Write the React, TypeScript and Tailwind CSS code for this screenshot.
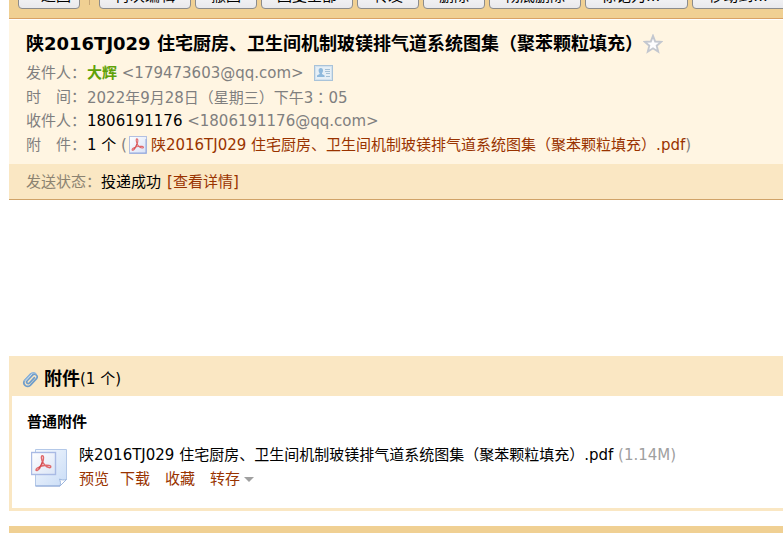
import React, { memo } from 'react';

interface ToolbarAction {
    label: string;
    hasMenu?: boolean;
}

const FILE_TITLE = '陕2016TJ029 住宅厨房、卫生间机制玻镁排气道系统图集（聚苯颗粒填充）';

const TOOLBAR_ACTIONS: ToolbarAction[] = [
    { label: '再次编辑' },
    { label: '撤回' },
    { label: '回复全部' },
    { label: '转发' },
    { label: '删除' },
    { label: '彻底删除' },
    { label: '标记为...', hasMenu: true },
    { label: '移动到...', hasMenu: true },
];

const BUTTON_CLASS =
    'flex h-[26px] shrink-0 items-center whitespace-nowrap rounded-[4px] border border-[#8c8c8c] bg-linear-to-b from-white to-[#e9e9ec] leading-5';

const StarIcon = () => (
    <svg width="20" height="20" viewBox="0 0 20 20" aria-hidden="true">
        <path
            d="M10 1.8 12.2 7.500 18.200 7.900 13.700 11.700 15.200 17.700 10 14.300 4.800 17.700 6.300 11.700 1.800 7.900 7.800 7.500Z"
            fill="#fdfdfe"
            stroke="#c3c7cf"
            strokeWidth="1.9"
        />
    </svg>
);

const ContactCardIcon = () => (
    <svg width="19" height="16" viewBox="0 0 19 16" aria-hidden="true">
        <rect x="0.5" y="0.5" width="18" height="15" fill="#e6eff6" stroke="#a9c3d9" />
        <rect x="1.5" y="1.5" width="16" height="13" fill="none" stroke="#d3e2ee" />
        <path d="M6.8 3c1.5 0 2.2 1 2.2 2.4 0 1.2-.5 2.1-1 2.6v1l2.6 1.4V12H3v-1.6L5.6 9V8c-.5-.5-1-1.4-1-2.6C4.6 4 5.3 3 6.8 3Z" fill="#8fb9dc" />
        <path d="M11 4.5h5M11 6.5h5M12 8.5h4M12 11.5h4" stroke="#a4c0d6" />
    </svg>
);

const AcrobatMark = () => (
    <>
        <path
            d="M7.8 2.8C9.2 2.6 9 5.500 8.300 7.500 7.500 9.900 5.600 13.500 4 14.200 2.800 14.600 2.700 13.300 4.100 12.300 6.300 10.900 10.500 9.900 13.200 10.400 15.200 10.800 14.700 12.300 13.100 12 10.800 11.600 8.400 8.900 7.600 6.300 7.200 4.800 6.900 3 7.800 2.800Z"
            fill="none"
            stroke="#e0686b"
            strokeWidth="1.1"
        />
        <path d="M8 7.500C7.300 9.500 6.300 11.300 5.200 12.800" fill="none" stroke="#d1474b" strokeWidth="0.8" />
    </>
);

const PdfSmallIcon = () => (
    <svg className="ml-[2px] shrink-0" width="18" height="18" viewBox="0 0 18 18" aria-hidden="true">
        <defs>
            <linearGradient id="pdf-small" x1="0" y1="0" x2="1" y2="1">
                <stop offset="0" stopColor="#fff" />
                <stop offset="1" stopColor="#d8e1f6" />
            </linearGradient>
        </defs>
        <rect x="0.5" y="0.5" width="17" height="17" fill="url(#pdf-small)" stroke="#b3c0e2" />
        <path d="M1 17h16V3" fill="none" stroke="#94a8dc" />
        <AcrobatMark />
    </svg>
);

const PdfLargeIcon = () => (
    <svg width="36" height="39" viewBox="0 0 36 39" aria-hidden="true">
        <defs>
            <linearGradient id="pdf-page" x1="0" y1="0" x2="1" y2="1">
                <stop offset="0" stopColor="#f5f9fe" />
                <stop offset="1" stopColor="#c9dcf6" />
            </linearGradient>
            <linearGradient id="pdf-badge" x1="0" y1="0" x2="1" y2="1">
                <stop offset="0" stopColor="#fff" />
                <stop offset="1" stopColor="#dbe5f6" />
            </linearGradient>
        </defs>
        <path d="M4.5 1.5h31v30l-6.5 6.5H4.5Z" fill="url(#pdf-page)" stroke="#b3c8e8" />
        <path d="M35.5 31.500c-3 .8-5 .5-7-.5 1 2.500 1.300 4.500.5 7Z" fill="#fff" stroke="#9db7df" />
        <path d="M4.5 38H29" stroke="#8ba6d6" />
        <rect x="0.5" y="4.5" width="24" height="22" fill="url(#pdf-badge)" stroke="#a9bae4" strokeWidth="1.4" />
        <g transform="translate(1 4) scale(1.3)">
            <AcrobatMark />
        </g>
    </svg>
);

const PaperclipIcon = () => (
    <svg width="17" height="17" viewBox="0 0 17 17" fill="none" strokeLinecap="round" aria-hidden="true">
        <path
            d="M12.4 6.6 7.600 11.800C5.800 13.600 3.600 11.600 5.200 9.700L10.500 4.100C12.700 1.900 16.500 4.600 14.700 7.400L8.300 14.300C5 17.300.3 13.500 2.400 9.800L8.800 2.900"
            stroke="#6f9dcb"
            strokeWidth="1.7"
        />
        <path d="M2.400 9.800 8.800 2.900C10.300 1.300 12.500 1.400 13.800 2.700" stroke="#8fb6dc" strokeWidth="1.4" />
        <path d="M3.800 9.600 9.600 3.400" stroke="#d3e6f5" strokeWidth="0.8" />
    </svg>
);

const Toolbar = memo(() => (
    <div className="overflow-hidden border-b border-[#d9a266] bg-[#f0d093]">
        <div className="-mt-[17px] flex items-end gap-1 pb-[9px] pl-[9px]">
            <button type="button" className={`${BUTTON_CLASS} px-2`}>
                « 返回
            </button>
            <span className="mx-[5px] mb-1 h-[18px] w-[2px] border-l border-[#c9a876] bg-white" />
            {TOOLBAR_ACTIONS.map(({ label, hasMenu }) => (
                <button key={label} type="button" className={`${BUTTON_CLASS} px-[15px]`}>
                    {label}
                    {hasMenu && (
                        <span className="ml-1 h-0 w-0 border-x-4 border-t-4 border-x-transparent border-t-[#555555]" />
                    )}
                </button>
            ))}
        </div>
    </div>
));
Toolbar.displayName = 'Toolbar';

const MailHeader = memo(() => (
    <header className="border-t border-white bg-[#fff5e2] pb-[7px] pl-[17px]">
        <div className="flex h-[41px] items-center pt-[6px]">
            <h1 className="whitespace-nowrap text-[18px] font-bold leading-6">{FILE_TITLE}</h1>
            <button type="button" aria-label="星标" className="shrink-0">
                <StarIcon />
            </button>
        </div>
        <dl className="text-[#7f7f7f]">
            <div className="flex h-6 items-center">
                <dt className="w-[61px] shrink-0 whitespace-nowrap">发件人：</dt>
                <dd className="flex items-center whitespace-pre">
                    <b className="text-[#5fa207]">大辉</b> &lt;179473603@qq.com&gt;
                    <button type="button" aria-label="联系人" className="ml-[10px]">
                        <ContactCardIcon />
                    </button>
                </dd>
            </div>
            <div className="flex h-6 items-center">
                <dt className="w-[61px] shrink-0 whitespace-nowrap">时　间：</dt>
                <dd>
                    2022年9月28日（星期三）下午3
                    <span className="font-['Noto_Sans_CJK_TC',sans-serif]" lang="zh-TW">：</span>
                    05
                </dd>
            </div>
            <div className="flex h-6 items-center">
                <dt className="w-[61px] shrink-0 whitespace-nowrap">收件人：</dt>
                <dd>
                    <span className="text-black">1806191176</span> &lt;1806191176@qq.com&gt;
                </dd>
            </div>
            <div className="flex h-6 items-center">
                <dt className="w-[61px] shrink-0 whitespace-nowrap">附　件：</dt>
                <dd className="flex items-center whitespace-pre">
                    <span className="text-black">1 个</span> (
                    <PdfSmallIcon />
                    <a href="#attachment" className="ml-1 text-[#993300]">
                        {FILE_TITLE}.pdf
                    </a>
                    )
                </dd>
            </div>
        </dl>
    </header>
));
MailHeader.displayName = 'MailHeader';

const AttachmentPanel = memo(() => (
    <section id="attachment" className="border-b-[3px] border-l-[3px] border-[#fae7c3]">
        <div className="flex h-10 items-center bg-[#fae7c3] pl-[10px] pt-[6px]">
            <PaperclipIcon />
            <h2 className="ml-[5px] text-[18px] font-bold leading-6">附件</h2>
            <span>(1 个)</span>
        </div>
        <div className="pb-[17px] pl-[15px] pt-[14px]">
            <h3 className="font-bold leading-6">普通附件</h3>
            <div className="mt-[9px] flex pl-1">
                <div className="mt-[5px] shrink-0">
                    <PdfLargeIcon />
                </div>
                <div className="ml-3 whitespace-nowrap leading-6">
                    <p>
                        {FILE_TITLE}.pdf <span className="text-[#a0a0a0]">(1.14M)</span>
                    </p>
                    <div className="flex items-center gap-[15px] text-[#993300]">
                        <div className="flex gap-[11px]">
                            <a href="#preview">预览</a>
                            <a href="#download">下载</a>
                        </div>
                        <a href="#favorite">收藏</a>
                        <button type="button" className="flex items-center gap-1">
                            转存
                            <span className="h-0 w-0 border-x-[5px] border-t-[5px] border-x-transparent border-t-[#a0a0a0]" />
                        </button>
                    </div>
                </div>
            </div>
        </div>
    </section>
));
AttachmentPanel.displayName = 'AttachmentPanel';

export default function App() {
    return (
        <div
            lang="zh-CN"
            className="h-screen overflow-hidden bg-white pl-[9px] font-['DejaVu_Sans','Noto_Sans_CJK_SC',sans-serif] text-[15px] leading-6 text-black"
        >
            <Toolbar />
            <MailHeader />
            <div className="flex h-9 items-center gap-[6px] border-b border-[#d0a368] bg-[#fae7c3] pl-[17px]">
                <p>
                    <span className="text-[#8c8371]">发送状态：</span>投递成功
                </p>
                <a href="#status" className="text-[#993300]">
                    [查看详情]
                </a>
            </div>
            <main className="pt-[156px]">
                <AttachmentPanel />
            </main>
            <div className="mt-[15px] h-10 bg-[#f0d093]" />
        </div>
    );
}
